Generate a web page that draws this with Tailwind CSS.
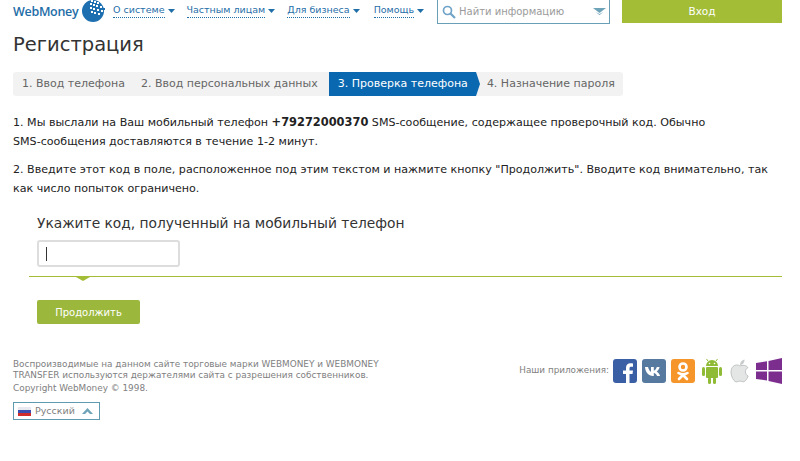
<!DOCTYPE html>
<html lang="ru">
<head>
  <meta charset="UTF-8" />
  <title>Регистрация</title>
  <script src="https://cdn.jsdelivr.net/npm/@tailwindcss/browser@4"></script>
</head>
<body class="bg-white h-[461px] overflow-hidden font-['DejaVu_Sans',sans-serif] text-[#333]">
  <!-- header -->
  <header class="flex items-start h-[24px] pl-[13px]">
    <span class="w-[69px] mt-[3px] font-['Open_Sans',sans-serif] font-semibold text-[12.500px] leading-[17px] tracking-[-0.3px] text-[#1f6ea8]">WebMoney</span>
    <svg class="w-[24px] h-[24px] -mt-[1px]" viewBox="0 0 24 24">
      <circle cx="11" cy="12" r="11" fill="#1d6fb0"/>
      <g fill="#fff">
        <rect x="9" y="1" width="2" height="2"/><rect x="12" y="2" width="2" height="2"/><rect x="15" y="3" width="2" height="2"/>
        <rect x="8" y="4" width="2" height="2"/><rect x="11" y="5" width="2" height="2"/><rect x="14" y="6" width="2" height="2"/><rect x="18" y="7" width="2" height="2"/>
        <rect x="8" y="8" width="2" height="2"/><rect x="11" y="9" width="2" height="2"/><rect x="15" y="10" width="2" height="2"/><rect x="19" y="11" width="2" height="2"/>
        <rect x="9" y="12" width="2" height="2"/><rect x="12" y="13" width="2" height="2"/><rect x="16" y="14" width="2" height="2"/>
      </g>
      <rect x="21" y="9" width="2" height="2" fill="#1d6fb0"/>
    </svg>
    <nav class="flex gap-[12px] ml-[7px] mt-[3px] text-[9.500px] leading-[14px] text-[#1f6ea8]">
      <a class="flex items-center gap-[3px]"><span class="border-b border-dotted border-[#1f6ea8]">О системе</span><svg class="w-[7px] h-[4px]" viewBox="0 0 7 4"><path d="M0 0h7L3.500 4z" fill="#1f6ea8"/></svg></a>
      <a class="flex items-center gap-[3px]"><span class="border-b border-dotted border-[#1f6ea8]">Частным лицам</span><svg class="w-[7px] h-[4px]" viewBox="0 0 7 4"><path d="M0 0h7L3.500 4z" fill="#1f6ea8"/></svg></a>
      <a class="flex items-center gap-[3px]"><span class="border-b border-dotted border-[#1f6ea8]">Для бизнеса</span><svg class="w-[7px] h-[4px]" viewBox="0 0 7 4"><path d="M0 0h7L3.500 4z" fill="#1f6ea8"/></svg></a>
      <a class="ml-[2px] flex items-center gap-[3px]"><span class="border-b border-dotted border-[#1f6ea8]">Помощь</span><svg class="w-[7px] h-[4px]" viewBox="0 0 7 4"><path d="M0 0h7L3.500 4z" fill="#1f6ea8"/></svg></a>
    </nav>
    <div class="absolute left-[437px] top-0 w-[173px] h-[24px] flex items-center border-x border-b border-[#6a9fb8] pl-[4px] pr-[3px]">
      <svg class="w-[14px] h-[14px]" viewBox="0 0 14 14" fill="none" stroke="#6fa3c7" stroke-width="1.700"><circle cx="5.500" cy="5.500" r="4"/><path d="M8.500 8.500 13 13" stroke-width="2.200"/></svg>
      <span class="ml-[3px] text-[10px] text-[#9a9a9a]">Найти информацию</span>
      <svg class="ml-auto w-[13px] h-[8px]" viewBox="0 0 13 8" fill="#6fa3b8"><path d="M0 0h13L6.500 5z"/><path d="M2.500 4l4 3 4-3-4 2z"/></svg>
    </div>
    <button class="absolute left-[622px] top-0 w-[160px] h-[23px] bg-[#a3bd37] text-white text-[10.500px]">Вход</button>
  </header>

  <main class="pl-[13px]">
    <h1 class="mt-[7px] text-[19.500px] leading-[28px] text-[#333]">Регистрация</h1>

    <!-- steps -->
    <div class="mt-[13px] flex w-[610px] h-[24px] items-center text-[11px] text-[#666] bg-[#f2f2f2] rounded-[3px]">
      <span class="pl-[9px]">1. Ввод телефона</span>
      <span class="pl-[16px] pr-[11px]">2. Ввод персональных данных</span>
      <span class="relative h-[24px] flex items-center pl-[9px] pr-[8px] bg-[#0a68b0] text-white">3. Проверка телефона<span class="absolute left-full top-0 h-0 w-0 border-y-[12px] border-y-transparent border-l-[4px] border-l-[#0a68b0]"></span></span>
      <span class="pl-[11px]">4. Назначение пароля</span>
    </div>

    <!-- instructions -->
    <div class="mt-[17px] w-[756px] text-[11.100px] leading-[19px] text-[#222]">
      <p>1. Мы выслали на Ваш мобильный телефон <b class="text-[11.400px]">+79272000370</b> SMS-сообщение, содержащее проверочный код. Обычно <span class="whitespace-nowrap">SMS-сообщения</span> доставляются в течение 1-2 минут.</p>
      <p class="mt-[9px]">2. Введите этот код в поле, расположенное под этим текстом и нажмите кнопку "Продолжить". Вводите код внимательно, так как число попыток ограничено.</p>
    </div>

    <!-- code form -->
    <h2 class="mt-[15px] ml-[24px] text-[13.800px] leading-[20px] text-[#333]">Укажите код, полученный на мобильный телефон</h2>
    <div class="mt-[7px] ml-[24px] w-[143px] h-[27px] flex items-center pl-[7px] bg-white border-2 border-[#ddd] rounded-[3px]">
      <span class="w-[1px] h-[14px] bg-[#333]"></span>
    </div>
    <div class="relative mt-[9px] ml-[16px] w-[753px] h-[1px] bg-[#a3bd37]">
      <span class="absolute left-[47px] top-[1px] w-0 h-0 border-x-[7px] border-x-transparent border-t-[4px] border-t-[#a3bd37]"></span>
    </div>
    <button class="block mt-[23px] ml-[24px] w-[103px] h-[24px] rounded-[2px] bg-[#9bb83c] text-white text-[10px]">Продолжить</button>

    <!-- footer -->
    <footer class="relative mt-[35px] text-[8.900px] text-[#808080]">
      <p class="w-[380px] leading-[11px]">Воспроизводимые на данном сайте торговые марки WEBMONEY и WEBMONEY TRANSFER используются держателями сайта с разрешения собственников.</p>
      <p class="mt-[1px] leading-[13px]">Copyright WebMoney © 1998.</p>
      <div class="mt-[7px] w-[87px] h-[18px] flex items-center border border-[#5f9bb0] pl-[4px] pr-[6px] text-[9.500px]">
        <span class="w-[13px] h-[9px] bg-[linear-gradient(#e8e8f0_33%,#3a4fb0_33%,#3a4fb0_66%,#d02c2c_66%)]"></span>
        <span class="ml-[4px]">Русский</span>
        <svg class="ml-auto w-[11px] h-[6px]" viewBox="0 0 11 6" fill="#6fa3b8"><path d="M5.500 0 11 6H8L5.500 3.500 3 6H0z"/></svg>
      </div>
      <div class="absolute right-[18px] -top-[1px] flex items-center h-[26px]">
        <span class="text-[8.800px] mr-[4px]">Наши приложения:</span>
        <svg class="w-[24px] h-[24px]" viewBox="0 0 24 24"><rect width="24" height="24" rx="3" fill="#3b5fa5"/><path d="M16.500 24v-9h3l.5-3.500h-3.500V9.500c0-1.200.4-1.800 1.800-1.800H20V4.500c-.5-.1-1.500-.2-2.600-.2-2.600 0-4.400 1.600-4.400 4.600v2.600h-3V15h3v9z" fill="#fff"/></svg>
        <svg class="ml-[5px] w-[24px] h-[24px]" viewBox="0 0 24 24"><rect width="24" height="24" rx="3" fill="#55799f"/><path d="M3 8h3c.5 2 1.800 4.500 3 4.800V8h2.800v3.700c1.200-.2 2.500-2 3-3.700h2.800c-.4 2-1.800 3.800-2.900 4.600 1.200.7 2.800 2.200 3.400 4.400h-3.100c-.5-1.500-1.700-2.700-3.200-2.900V17h-.8C6.500 17 3.500 13.500 3 8z" fill="#fff"/></svg>
        <svg class="ml-[5px] w-[24px] h-[24px]" viewBox="0 0 24 24"><rect width="24" height="24" rx="3" fill="#f5952a"/><g fill="none" stroke="#fff" stroke-width="2.600" stroke-linecap="round"><circle cx="12" cy="8" r="3.500"/><path d="M7.500 14c3 1.800 6 1.800 9 0M12 15.500v1M12 16l-4 4M12 16l4 4"/></g></svg>
        <svg class="ml-[6px] w-[22px] h-[26px]" viewBox="0 0 22 26" fill="#8fbb36"><path d="M5 8a6 6 0 0 1 12 0z"/><path d="M7 3 5.500 1M15 3l1.500-2" stroke="#8fbb36"/><rect x="5" y="9" width="12" height="11" rx="1"/><rect x="1" y="9" width="3" height="9" rx="1.500"/><rect x="18" y="9" width="3" height="9" rx="1.500"/><rect x="7" y="19" width="3" height="7" rx="1.500"/><rect x="12" y="19" width="3" height="7" rx="1.500"/><circle cx="8.500" cy="5.500" r=".8" fill="#fff"/><circle cx="13.500" cy="5.500" r=".8" fill="#fff"/></svg>
        <svg class="ml-[6px] w-[22px] h-[26px]" viewBox="0 0 22 26"><path d="M11 8c-2-1.500-5-1.500-7 .5C1 11.500 1.500 18 5 22.500c1.500 1.800 3 1.500 4 1 1.200-.5 2.600-.5 3.800 0 1.500.6 2.800.2 4-1.200 1.100-1.400 1.900-3 2.400-4.300-3.500-1.500-3.800-6.500-.2-8.500C17 7 13.500 6.800 11 8z" fill="#e4e6e6" stroke="#b4b8b8" stroke-width=".8"/><path d="M11 7c0-3 2-5 4.500-5.500C15.800 4.500 13.500 7 11 7z" fill="#c9cccc"/></svg>
        <svg class="ml-[5px] w-[26px] h-[26px]" viewBox="0 0 26 26" fill="#7b2e8e"><path d="M0 5l11-1.800V12H0z"/><path d="M12.500 3 26 0v12H12.500z"/><path d="M0 13.500h11v9L0 21z"/><path d="M12.500 13.500H26V26l-13.500-3z"/></svg>
      </div>
    </footer>
  </main>
</body>
</html>
